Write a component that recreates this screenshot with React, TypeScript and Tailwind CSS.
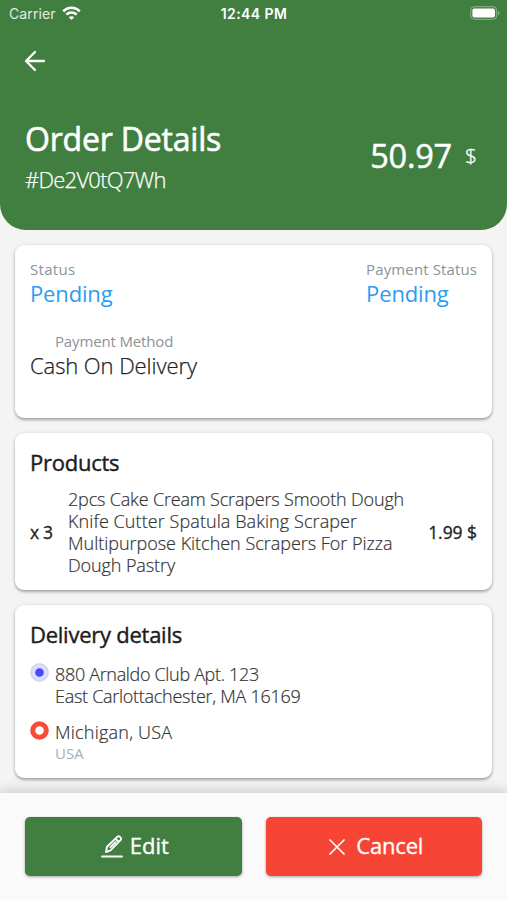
import type { ReactNode } from "react";

function Card({ children, className }: { children: ReactNode; className: string }) {
  return (
    <section className={`rounded-[9px] bg-white px-[15px] shadow-[0_2px_3px_rgba(0,0,0,0.3),0_0_4px_rgba(0,0,0,0.08)] ${className}`}>
      {children}
    </section>
  );
}

function StatusBar() {
  return (
    <div className="flex h-7 items-center justify-between pr-[7px] pl-[9px] font-['Inter',sans-serif] text-[14px] leading-7 text-white">
      <div className="flex w-[100px] items-center gap-[6px]">
        <span className="tracking-[0.1px] text-white/85">Carrier</span>
        <svg width="19" height="15" viewBox="0 0 19 15" fill="none" stroke="white" strokeWidth="2.5" className="-mt-[2px]">
          <path d="M1.2 5.3C5.8.7 13.2.7 17.8 5.3" />
          <path d="M4.3 8.7c2.9-2.8 7.5-2.8 10.4 0" />
          <path d="M6.8 11.2c1.5-1.4 3.9-1.4 5.4 0L9.5 14z" fill="white" stroke="none" />
        </svg>
      </div>
      <span className="pr-px font-semibold tracking-[0.4px]">12:44 PM</span>
      <div className="flex w-[100px] justify-end">
        <svg width="30" height="14" viewBox="0 0 30 14" className="-mt-[2px]">
          <rect x="0.7" y="0.7" width="26" height="12.6" rx="3.6" fill="none" stroke="white" strokeOpacity="0.4" />
          <rect x="2.4" y="2.4" width="22.6" height="9.2" rx="2" fill="white" />
          <path d="M28 4.8c1.8.8 1.8 3.6 0 4.4z" fill="white" fillOpacity="0.45" />
        </svg>
      </div>
    </div>
  );
}

export default function App() {
  return (
    <main className="flex h-[900px] w-[507px] flex-col overflow-hidden bg-[#f4f4f4] font-['Open_Sans',sans-serif] whitespace-nowrap">
      <header className="h-[230px] shrink-0 rounded-b-[26px] bg-[#417f41] text-white">
        <StatusBar />
        <div className="pt-[22px] pl-[24px]">
          <svg width="22" height="22" viewBox="0 0 22 22" fill="none" stroke="white" strokeWidth="2.3" strokeLinecap="round" strokeLinejoin="round">
            <path d="M20 11H2.5M11 2L2 11l9 9" />
          </svg>
        </div>
        <div className="flex justify-between pt-[47px] pr-[30px] pl-[25px]">
          <div>
            <h1 className="text-[32px] leading-[40px] tracking-[-0.2px] [-webkit-text-stroke:0.6px]">Order Details</h1>
            <p className="text-[22px] leading-[40px] font-light tracking-[-0.75px] [-webkit-text-stroke:0.25px]">#De2V0tQ7Wh</p>
          </div>
          <div className="flex items-center gap-[13px] self-start pt-[17px] leading-[40px]">
            <span className="text-[32.5px] tracking-[-0.2px] [-webkit-text-stroke:0.5px]">50.97</span>
            <span className="text-[21px] font-light [-webkit-text-stroke:0.4px]">$</span>
          </div>
        </div>
      </header>

      <div className="flex grow flex-col gap-[15px] px-[15px] pt-[15px]">
        <Card className="h-[173px] pt-[14px]">
          <div className="flex justify-between">
            <div>
              <p className="text-[15px] leading-5 tracking-[0.3px] text-[#8d9298]">Status</p>
              <p className="text-[22px] leading-7 tracking-[-0.15px] text-[#2d9cf0]">Pending</p>
            </div>
            <div>
              <p className="text-[15px] leading-5 tracking-[0.12px] text-[#8d9298]">Payment Status</p>
              <p className="text-[22px] leading-7 tracking-[-0.15px] text-[#2d9cf0]">Pending</p>
            </div>
          </div>
          <p className="mt-6 pl-[25px] text-[15px] leading-5 tracking-[-0.15px] text-[#8d9298]">Payment Method</p>
          <p className="text-[22px] leading-7 font-light tracking-[-0.08px] text-[#222] [-webkit-text-stroke:0.25px]">Cash On Delivery</p>
        </Card>

        <Card className="h-[157px] pt-[15px]">
          <h2 className="text-[22px] leading-7 tracking-[-0.25px] text-[#1c1c1c] [-webkit-text-stroke:0.4px]">Products</h2>
          <div className="mt-3 flex items-center text-[18px] leading-[22px]">
            <span className="w-[38px] text-[17.5px] tracking-[-0.4px] text-[#222] [-webkit-text-stroke:0.3px]">x 3</span>
            <p className="font-light text-[#333] [-webkit-text-stroke:0.2px]">
              <span className="tracking-[-0.17px]">2pcs Cake Cream Scrapers Smooth Dough</span><br />
              <span className="tracking-[0.08px]">Knife Cutter Spatula Baking Scraper</span><br />
              <span className="tracking-[-0.02px]">Multipurpose Kitchen Scrapers For Pizza</span><br />
              <span className="tracking-[-0.1px]">Dough Pastry</span>
            </p>
            <span className="ml-auto text-[17.5px] tracking-[-0.05px] text-[#222] [-webkit-text-stroke:0.3px]">1.99 $</span>
          </div>
        </Card>

        <Card className="h-[173px] pt-[15px]">
          <h2 className="text-[22px] leading-7 tracking-[-0.25px] text-[#1c1c1c] [-webkit-text-stroke:0.4px]">Delivery details</h2>
          <div className="mt-[15px] flex gap-[6px]">
            <svg width="19" height="19" viewBox="0 0 19 19" className="shrink-0">
              <circle cx="9.5" cy="9.5" r="8.8" fill="#dcdcff" stroke="#c9c9fa" />
              <circle cx="9.5" cy="9.5" r="4.3" fill="#4a4af5" />
            </svg>
            <p className="text-[18px] leading-[22px] font-light text-[#333] [-webkit-text-stroke:0.2px]">
              <span className="tracking-[-0.33px]">880 Arnaldo Club Apt. 123</span><br />
              <span className="tracking-[-0.28px]">East Carlottachester, MA 16169</span>
            </p>
          </div>
          <div className="mt-[14px] flex gap-[6px]">
            <svg width="19" height="19" viewBox="0 0 19 19" className="shrink-0">
              <circle cx="9.5" cy="9.5" r="6.8" fill="white" stroke="#fa4b38" strokeWidth="5" />
            </svg>
            <div>
              <p className="text-[18px] leading-[22px] font-light tracking-[0.22px] text-[#333] [-webkit-text-stroke:0.2px]">Michigan, USA</p>
              <p className="text-[15px] leading-5 tracking-[0.1px] text-[#a9aeb3]">USA</p>
            </div>
          </div>
        </Card>
      </div>

      <footer className="flex h-[107px] shrink-0 gap-6 bg-[#fafafa] px-[25px] pt-6 text-[22px] text-white shadow-[0_-2px_12px_rgba(0,0,0,0.18)]">
        <button className="flex h-[59px] w-[217px] items-center justify-center gap-[7px] rounded-[5px] bg-[#417f41] pl-[3px] shadow-[0_1px_3px_rgba(0,0,0,0.35)]">
          <svg width="22" height="23" viewBox="0 0 22 23" fill="none" stroke="white" strokeWidth="1.9" strokeLinecap="round" strokeLinejoin="round">
            <path d="M1 21.5h20M5 17l1-5.2L16.2 1.9c1.8-1.7 5.1 1.2 3.3 3.2L9.5 15.3zM14.5 3.8l3.3 3.2M9.5 12.2l5-5" />
          </svg>
          <span className="-mt-[3px] [-webkit-text-stroke:0.3px]">Edit</span>
        </button>
        <button className="flex h-[59px] w-[217px] items-center justify-center gap-[11px] rounded-[5px] bg-[#f64435] pl-[5px] shadow-[0_1px_3px_rgba(0,0,0,0.35)]">
          <svg width="16" height="16" viewBox="0 0 16 16" fill="none" stroke="white" strokeWidth="1.7" strokeLinecap="round">
            <path d="M1 1l14 14M15 1L1 15" />
          </svg>
          <span className="-mt-[3px] tracking-[-0.2px] [-webkit-text-stroke:0.3px]">Cancel</span>
        </button>
      </footer>
    </main>
  );
}
